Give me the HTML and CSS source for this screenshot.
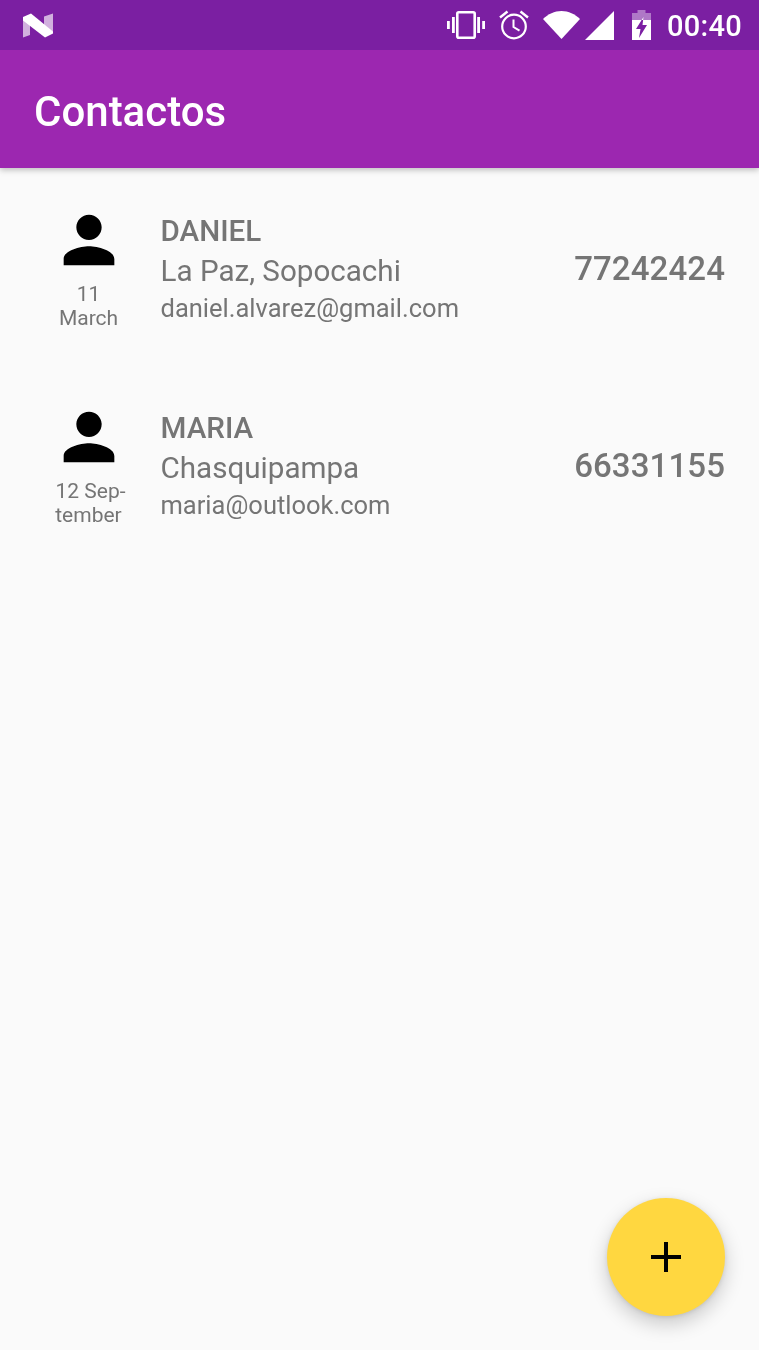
FILE: index.html
```html
<!DOCTYPE html>
<html lang="es">
<head>
<meta charset="utf-8">
<title>Contactos</title>
<link rel="stylesheet" href="styles.css">
</head>
<body>
<div class="screen">
  <header class="header">
    <div class="statusbar">
      <svg class="n-logo" viewBox="0 0 30 25" width="30" height="25">
        <path d="M0 4V24.500L7 22V9Z M21 3.500L30 .5V19L21 12Z" fill="#fff" fill-opacity=".65"/>
        <path d="M0 4L8 .5L30 18.500V20.500L22 24.500L0 7.500Z" fill="#fff"/>
      </svg>
      <div class="status-icons">
        <svg class="st-vibrate" viewBox="0 0 38 28" width="38" height="28">
          <rect x="10.300" y="1.300" width="17.400" height="25.400" rx="1.500" fill="none" stroke="#fff" stroke-width="2.600"/>
          <path d="M5 6h2.800v16H5zM0 10h2.800v8H0zM30.200 6H33v16h-2.800zM35.200 10H38v8h-2.800z" fill="#fff"/>
        </svg>
        <svg class="st-alarm" viewBox="0 0 30 30" width="30" height="30">
          <circle cx="15" cy="16.500" r="11.800" fill="none" stroke="#fff" stroke-width="2.200"/>
          <path d="M14.500 9.500V17l6 3.600" fill="none" stroke="#fff" stroke-width="2"/>
          <path d="M8.500 1.500L1 7.500M21.500 1.500L29 7.500" fill="none" stroke="#fff" stroke-width="2.400"/>
        </svg>
        <svg class="st-wifi" viewBox="0 0 37 28" width="37" height="28">
          <path d="M0 8C5 3 11.500 0 18.500 0S32 3 37 8L18.500 28z" fill="#fff"/>
        </svg>
        <svg class="st-signal" viewBox="0 0 29 29" width="29" height="29">
          <path d="M0 29L29 0v29z" fill="#fff"/>
        </svg>
        <svg class="st-battery" viewBox="0 0 19 30" width="19" height="30">
          <path d="M5.500 0h8v3H19v7H0V3h5.500z" fill="#fff" fill-opacity=".4"/>
          <path d="M0 10h19v20H0zM11.500 7L4 19h4.500L7 28l8-13h-4.500z" fill="#fff" fill-rule="evenodd"/>
        </svg>
        <span class="clock">00:40</span>
      </div>
    </div>
    <div class="toolbar"><h1 class="title">Contactos</h1></div>
  </header>

  <main class="list">
    <article class="contact">
      <div class="avatar">
        <svg class="person" viewBox="0 0 24 24"><path d="M12 12c2.210 0 4-1.790 4-4s-1.790-4-4-4-4 1.790-4 4 1.790 4 4 4zm0 2c-2.670 0-8 1.340-8 4v2h16v-2c0-2.660-5.330-4-8-4z"/></svg>
        <div class="date">11<br>March</div>
      </div>
      <div class="info">
        <div class="name">DANIEL</div>
        <div class="address">La Paz, Sopocachi</div>
        <div class="email">daniel.alvarez@gmail.com</div>
      </div>
      <div class="phone">77242424</div>
    </article>
    <article class="contact">
      <div class="avatar">
        <svg class="person" viewBox="0 0 24 24"><path d="M12 12c2.210 0 4-1.790 4-4s-1.790-4-4-4-4 1.790-4 4 1.790 4 4 4zm0 2c-2.670 0-8 1.340-8 4v2h16v-2c0-2.660-5.330-4-8-4z"/></svg>
        <div class="date date-hyphenated">12 Sep-<br>tember</div>
      </div>
      <div class="info">
        <div class="name">MARIA</div>
        <div class="address">Chasquipampa</div>
        <div class="email">maria@outlook.com</div>
      </div>
      <div class="phone">66331155</div>
    </article>
  </main>

  <button class="fab" type="button" aria-label="Agregar">
    <svg viewBox="0 0 30 30" width="30" height="30"><path d="M13 0h4v13h13v4H17v13h-4V17H0v-4h13z"/></svg>
  </button>
</div>
</body>
</html>
```
FILE: styles.css
```css
* { box-sizing: border-box; }
html, body { margin: 0; padding: 0; }
body { font-family: Roboto, "Liberation Sans", sans-serif; background: #fafafa; }
.screen { position: relative; width: 759px; height: 1350px; overflow: hidden; background: #fafafa; }

.header { box-shadow: 0 2px 6px rgba(0,0,0,.25); position: relative; }
.statusbar {
  height: 50px; background: #7b1fa2; display: flex; align-items: center;
  justify-content: space-between; padding: 0 17px 0 23px; color: #fff;
}
.n-logo { display: block; }
.status-icons { display: flex; align-items: center; }
.st-vibrate { margin-right: 14px; }
.st-alarm { margin-right: 14px; }
.st-wifi { margin-right: 5px; }
.st-signal { margin-right: 18px; }
.st-battery { margin-right: 16px; }
.clock { font-size: 29px; font-weight: 500; line-height: 50px; letter-spacing: .3px; padding-top: 1px; will-change: transform; }

.toolbar { height: 118px; background: #9c27b0; display: flex; align-items: center; padding: 4px 34px 0; }
.title { margin: 0; font-size: 42px; font-weight: 500; color: #fff; will-change: transform; }

.list { display: flex; flex-direction: column; padding-top: 34px; will-change: transform; }
.contact { display: flex; align-items: flex-start; height: 197px; padding: 0 34px; color: #757575; }
.avatar { width: 109px; display: flex; flex-direction: column; align-items: center; }
.person { width: 76px; height: 76px; display: block; fill: #000; }
.date { margin-top: 4px; font-size: 21px; line-height: 24px; text-align: center; }
.date-hyphenated { text-indent: 4px; }
.info { flex: 1; margin-left: 17.500px; padding-top: 10px; }
.name { font-size: 29.600px; font-weight: 500; line-height: 38px; }
.address { font-size: 29.600px; line-height: 42px; }
.email { font-size: 25.500px; line-height: 33px; }
.phone { font-size: 33px; font-weight: 500; line-height: 44px; margin-top: 45px; letter-spacing: .1px; }

.fab {
  position: absolute; left: 607px; top: 1198px; width: 118px; height: 118px; border: 0; padding: 0;
  border-radius: 50%; background: #ffd740; display: flex; align-items: center; justify-content: center;
  box-shadow: 0 8px 20px rgba(0,0,0,.2), 0 1px 4px rgba(0,0,0,.1);
}
.fab svg { display: block; fill: #000; }
```
